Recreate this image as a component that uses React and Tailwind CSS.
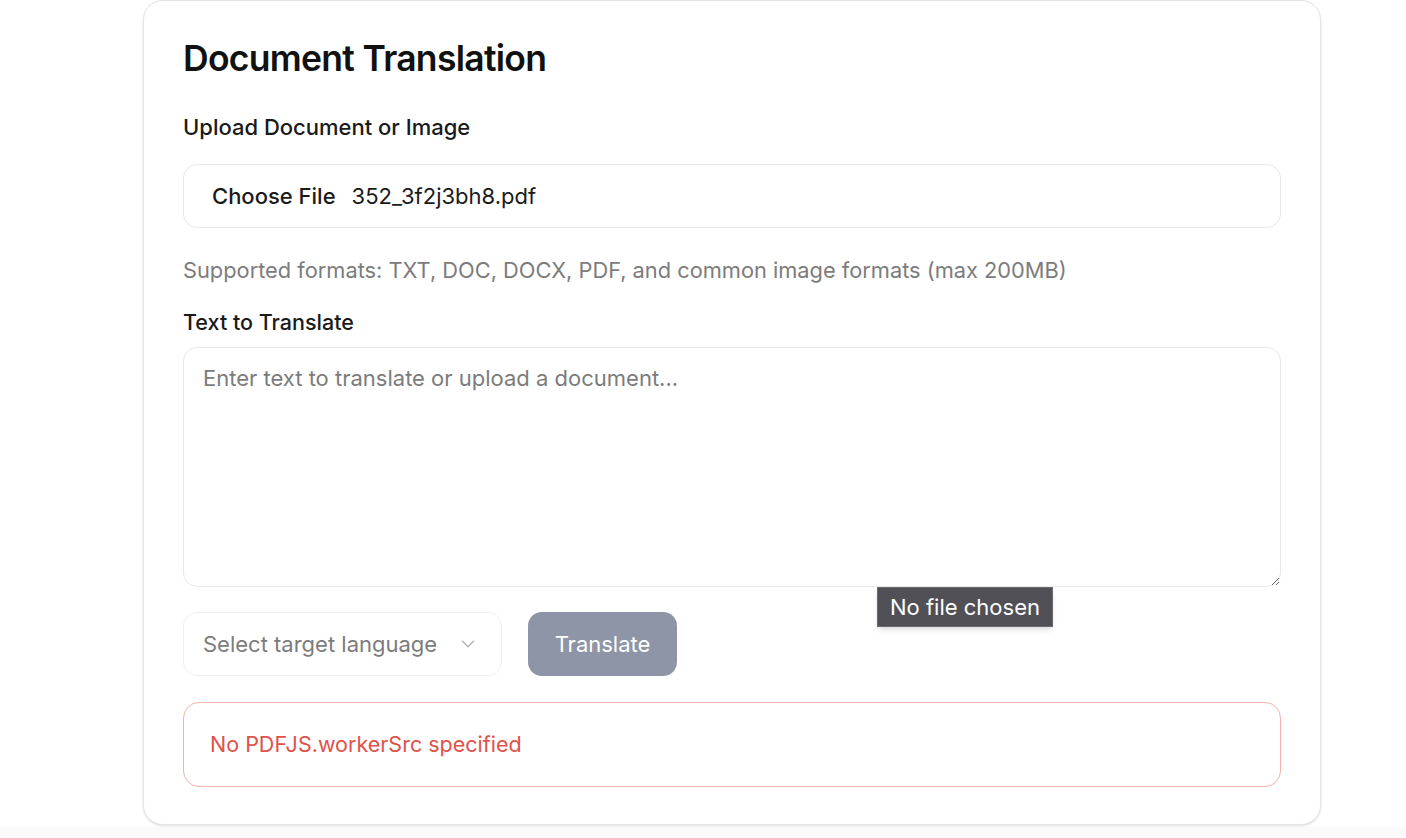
import { ChevronDown } from 'lucide-react';

export default function App() {
    return (
        <div className="h-[838px] overflow-hidden bg-[#fafafa]" style={{ fontFamily: 'Inter, "Noto Sans", sans-serif' }}>
            <div className="bg-white pb-[2px]">
                <div className="ml-[143px] w-[1178px] rounded-b-[20px] rounded-t-[20px] border border-[#e5e5e5] bg-white px-[39px] pt-[36px] pb-[37px] shadow-sm">
                    <h1 className="text-[35.5px] font-semibold leading-[44px] tracking-[-0.02em] text-[#111]">
                        Document Translation
                    </h1>

                    {/* Upload */}
                    <label className="mt-[34px] block text-[22px] font-medium leading-[24px] text-[#1a1a1a]">
                        Upload Document or Image
                    </label>
                    <div className="mt-[25px] flex h-[64px] items-center rounded-[14px] border border-[#e8e8e8] px-[28px] text-[22px] text-[#1a1a1a]">
                        <span className="font-medium">Choose File</span>
                        <span className="ml-[16px]">352_3f2j3bh8.pdf</span>
                    </div>
                    <p className="mt-[30px] text-[21.8px] leading-[24px] text-[#7c7c7c]">
                        Supported formats: TXT, DOC, DOCX, PDF, and common image formats (max 200MB)
                    </p>

                    {/* Text */}
                    <label className="mt-[28px] block text-[21.5px] font-medium leading-[24px] text-[#1a1a1a]">
                        Text to Translate
                    </label>
                    <div className="relative mt-[13px]">
                        <textarea
                            className="block h-[240px] w-full resize-y rounded-[14px] border border-[#e8e8e8] px-[19px] py-[17px] text-[22px] leading-[26px] outline-none placeholder:text-[#7c7c7c]"
                            placeholder="Enter text to translate or upload a document..."
                        />
                        <div className="absolute left-[694px] top-[240px] z-10 border border-[#6a6a70] bg-[#505056] px-[12px] py-[6px] text-[22px] leading-[26px] text-white shadow-md">
                            No file chosen
                        </div>
                    </div>

                    {/* Controls */}
                    <div className="mt-[25px] flex items-center gap-[26px]">
                        <div className="flex h-[64px] w-[319px] items-center justify-between rounded-[14px] border border-[#efefef] pl-[19px] pr-[22px] text-[22px] text-[#7c7c7c]">
                            <span>Select target language</span>
                            <ChevronDown className="h-[22px] w-[22px] text-[#b5b5b5]" strokeWidth={1.5} />
                        </div>
                        <button className="h-[64px] w-[149px] rounded-[14px] bg-[#8e95a6] text-[22px] text-white">
                            Translate
                        </button>
                    </div>

                    {/* Error */}
                    <div className="mt-[26px] flex h-[85px] items-center rounded-[16px] border border-[#f5b3ae] px-[26px] text-[21.5px] text-[#e0524a]">
                        No PDFJS.workerSrc specified
                    </div>
                </div>
            </div>
        </div>
    );
}
